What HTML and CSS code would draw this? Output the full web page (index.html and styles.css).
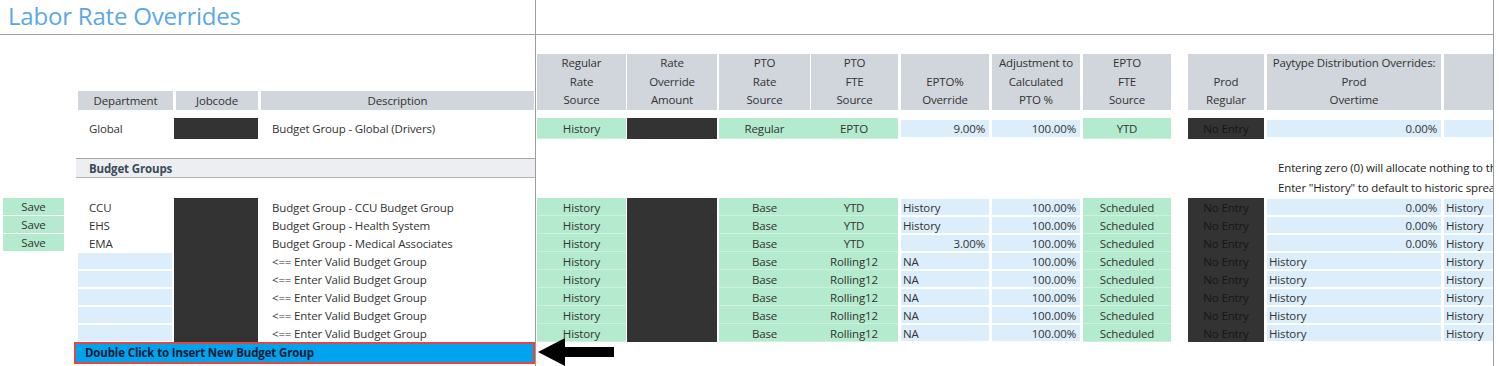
FILE: index.html
```html
<!DOCTYPE html>
<html lang="en">
<head>
  <meta charset="UTF-8">
  <title>Labor Rate Overrides</title>
  <link rel="stylesheet" href="styles.css">
</head>
<body>
  <div class="sheet">
    <div class="pane pane-left">
      <div class="title-bar"><h1 class="title">Labor Rate Overrides</h1></div>

      <div class="head-row">
        <div class="hcell c-dept">Department</div>
        <div class="hcell c-job">Jobcode</div>
        <div class="hcell c-desc">Description</div>
      </div>

      <div class="row row-global">
        <div class="cell c-save"></div>
        <div class="cell c-dept txt">Global</div>
        <div class="cell c-job black"></div>
        <div class="cell c-desc txt">Budget Group - Global (Drivers)</div>
      </div>

      <div class="mid">
        <div class="band">Budget Groups</div>
      </div>

      <div class="rows">
        <div class="row">
          <div class="cell c-save save">Save</div>
          <div class="cell c-dept txt">CCU</div>
          <div class="cell c-job black"></div>
          <div class="cell c-desc txt">Budget Group - CCU Budget Group</div>
        </div>
        <div class="row">
          <div class="cell c-save save">Save</div>
          <div class="cell c-dept txt">EHS</div>
          <div class="cell c-job black"></div>
          <div class="cell c-desc txt">Budget Group - Health System</div>
        </div>
        <div class="row">
          <div class="cell c-save save">Save</div>
          <div class="cell c-dept txt">EMA</div>
          <div class="cell c-job black"></div>
          <div class="cell c-desc txt">Budget Group - Medical Associates</div>
        </div>
        <div class="row">
          <div class="cell c-save"></div>
          <div class="cell c-dept blue"></div>
          <div class="cell c-job black"></div>
          <div class="cell c-desc txt">&lt;== Enter Valid Budget Group</div>
        </div>
        <div class="row">
          <div class="cell c-save"></div>
          <div class="cell c-dept blue"></div>
          <div class="cell c-job black"></div>
          <div class="cell c-desc txt">&lt;== Enter Valid Budget Group</div>
        </div>
        <div class="row">
          <div class="cell c-save"></div>
          <div class="cell c-dept blue"></div>
          <div class="cell c-job black"></div>
          <div class="cell c-desc txt">&lt;== Enter Valid Budget Group</div>
        </div>
        <div class="row">
          <div class="cell c-save"></div>
          <div class="cell c-dept blue"></div>
          <div class="cell c-job black"></div>
          <div class="cell c-desc txt">&lt;== Enter Valid Budget Group</div>
        </div>
        <div class="row">
          <div class="cell c-save"></div>
          <div class="cell c-dept blue"></div>
          <div class="cell c-job black"></div>
          <div class="cell c-desc txt">&lt;== Enter Valid Budget Group</div>
        </div>
      </div>

      <div class="insert-row">
        <div class="insert-bar">Double Click to Insert New Budget Group</div>
      </div>
    </div>

    <div class="pane pane-right">
      <div class="title-bar"></div>

      <div class="head-row">
        <div class="hcell tall c-rrs"><span>Regular</span><span>Rate</span><span>Source</span></div>
        <div class="hcell tall c-roa"><span>Rate</span><span>Override</span><span>Amount</span></div>
        <div class="hcell tall c-ptor"><span>PTO</span><span>Rate</span><span>Source</span></div>
        <div class="hcell tall c-ptof split"><span>PTO</span><span>FTE</span><span>Source</span></div>
        <div class="hcell tall c-epto"><span>EPTO%</span><span>Override</span></div>
        <div class="hcell tall c-adj"><span>Adjustment to</span><span>Calculated</span><span>PTO %</span></div>
        <div class="hcell tall c-efte"><span>EPTO</span><span>FTE</span><span>Source</span></div>
        <div class="hcell tall c-preg"><span>Prod</span><span>Regular</span></div>
        <div class="hcell tall c-pot"><span>Paytype Distribution Overrides:</span><span>Prod</span><span>Overtime</span></div>
        <div class="hcell tall c-next"></div>
      </div>

      <div class="row row-global">
        <div class="cell c-rrs green">History</div>
        <div class="cell c-roa black"></div>
        <div class="cell c-ptor green">Regular</div>
        <div class="cell c-ptof green">EPTO</div>
        <div class="cell c-epto blue num">9.00%</div>
        <div class="cell c-adj blue num">100.00%</div>
        <div class="cell c-efte green">YTD</div>
        <div class="cell c-preg black">No Entry</div>
        <div class="cell c-pot blue num">0.00%</div>
        <div class="cell c-next blue"></div>
      </div>

      <div class="mid notes">
        <p>Entering zero (0) will allocate nothing to that paytype</p>
        <p>Enter "History" to default to historic spread</p>
      </div>

      <div class="rows">
        <div class="row">
          <div class="cell c-rrs green">History</div>
          <div class="cell c-roa black"></div>
          <div class="cell c-ptor green">Base</div>
          <div class="cell c-ptof green">YTD</div>
          <div class="cell c-epto blue lft">History</div>
          <div class="cell c-adj blue num">100.00%</div>
          <div class="cell c-efte green">Scheduled</div>
          <div class="cell c-preg black">No Entry</div>
          <div class="cell c-pot blue num">0.00%</div>
          <div class="cell c-next blue lft">History</div>
        </div>
        <div class="row">
          <div class="cell c-rrs green">History</div>
          <div class="cell c-roa black"></div>
          <div class="cell c-ptor green">Base</div>
          <div class="cell c-ptof green">YTD</div>
          <div class="cell c-epto blue lft">History</div>
          <div class="cell c-adj blue num">100.00%</div>
          <div class="cell c-efte green">Scheduled</div>
          <div class="cell c-preg black">No Entry</div>
          <div class="cell c-pot blue num">0.00%</div>
          <div class="cell c-next blue lft">History</div>
        </div>
        <div class="row">
          <div class="cell c-rrs green">History</div>
          <div class="cell c-roa black"></div>
          <div class="cell c-ptor green">Base</div>
          <div class="cell c-ptof green">YTD</div>
          <div class="cell c-epto blue num">3.00%</div>
          <div class="cell c-adj blue num">100.00%</div>
          <div class="cell c-efte green">Scheduled</div>
          <div class="cell c-preg black">No Entry</div>
          <div class="cell c-pot blue num">0.00%</div>
          <div class="cell c-next blue lft">History</div>
        </div>
        <div class="row">
          <div class="cell c-rrs green">History</div>
          <div class="cell c-roa black"></div>
          <div class="cell c-ptor green">Base</div>
          <div class="cell c-ptof green">Rolling12</div>
          <div class="cell c-epto blue lft">NA</div>
          <div class="cell c-adj blue num">100.00%</div>
          <div class="cell c-efte green">Scheduled</div>
          <div class="cell c-preg black">No Entry</div>
          <div class="cell c-pot blue lft">History</div>
          <div class="cell c-next blue lft">History</div>
        </div>
        <div class="row">
          <div class="cell c-rrs green">History</div>
          <div class="cell c-roa black"></div>
          <div class="cell c-ptor green">Base</div>
          <div class="cell c-ptof green">Rolling12</div>
          <div class="cell c-epto blue lft">NA</div>
          <div class="cell c-adj blue num">100.00%</div>
          <div class="cell c-efte green">Scheduled</div>
          <div class="cell c-preg black">No Entry</div>
          <div class="cell c-pot blue lft">History</div>
          <div class="cell c-next blue lft">History</div>
        </div>
        <div class="row">
          <div class="cell c-rrs green">History</div>
          <div class="cell c-roa black"></div>
          <div class="cell c-ptor green">Base</div>
          <div class="cell c-ptof green">Rolling12</div>
          <div class="cell c-epto blue lft">NA</div>
          <div class="cell c-adj blue num">100.00%</div>
          <div class="cell c-efte green">Scheduled</div>
          <div class="cell c-preg black">No Entry</div>
          <div class="cell c-pot blue lft">History</div>
          <div class="cell c-next blue lft">History</div>
        </div>
        <div class="row">
          <div class="cell c-rrs green">History</div>
          <div class="cell c-roa black"></div>
          <div class="cell c-ptor green">Base</div>
          <div class="cell c-ptof green">Rolling12</div>
          <div class="cell c-epto blue lft">NA</div>
          <div class="cell c-adj blue num">100.00%</div>
          <div class="cell c-efte green">Scheduled</div>
          <div class="cell c-preg black">No Entry</div>
          <div class="cell c-pot blue lft">History</div>
          <div class="cell c-next blue lft">History</div>
        </div>
        <div class="row">
          <div class="cell c-rrs green">History</div>
          <div class="cell c-roa black"></div>
          <div class="cell c-ptor green">Base</div>
          <div class="cell c-ptof green">Rolling12</div>
          <div class="cell c-epto blue lft">NA</div>
          <div class="cell c-adj blue num">100.00%</div>
          <div class="cell c-efte green">Scheduled</div>
          <div class="cell c-preg black">No Entry</div>
          <div class="cell c-pot blue lft">History</div>
          <div class="cell c-next blue lft">History</div>
        </div>
      </div>

      <div class="insert-row">
        <svg class="arrow" width="76" height="30" viewBox="0 0 76 30">
          <polygon points="0,15 27,1 27,29" fill="#000"/>
          <rect x="26" y="10" width="50" height="10" fill="#000"/>
        </svg>
      </div>
    </div>
  </div>
</body>
</html>
```

FILE: styles.css
```css
* {
  box-sizing: border-box;
}
body {
  margin: 0;
  background: #fff;
  color: #333;
  font-family: "Open Sans", "Noto Sans", sans-serif;
  font-size: 11.5px;
  letter-spacing: -0.15px;
}
.sheet {
  display: flex;
  height: 366px;
  overflow: hidden;
}
.pane {
  flex-shrink: 0;
  overflow: hidden;
}
.pane-left {
  width: 536px;
  border-right: 1px solid #9c9c9c;
}
.pane-right {
  width: 958px;
  border-right: 1px solid #9c9c9c;
}
.title-bar {
  height: 35px;
  border-bottom: 1px solid #a4a4a4;
}
.title {
  margin: 0;
  padding-left: 8px;
  font-size: 24px;
  font-weight: 400;
  letter-spacing: -0.2px;
  line-height: 32px;
  color: #5aa9e4;
}

/* headers */
.head-row {
  display: flex;
  align-items: flex-end;
  height: 75px;
}
.hcell {
  flex-shrink: 0;
  height: 19px;
  background: #d0d6dc;
  line-height: 19px;
  text-align: center;
  white-space: nowrap;
}
.hcell.tall {
  height: 56px;
  display: flex;
  flex-direction: column;
  justify-content: flex-end;
  line-height: 18.7px;
}
.hcell.split {
  border-left: 1px solid #fff;
}

/* rows */
.row {
  display: flex;
  height: 18px;
}
.row-global {
  height: 21px;
  margin-top: 8px;
}
.cell {
  flex-shrink: 0;
  height: 100%;
  line-height: 19px;
  white-space: nowrap;
  overflow: hidden;
}
.row-global .cell {
  line-height: 22px;
}
.txt {
  padding-left: 11px;
}
.c-desc.txt {
  padding-left: 10px;
}
.green {
  background: #b4eacd;
  text-align: center;
  box-shadow: inset 0 -1px rgba(255, 255, 255, 0.35);
}
.black {
  background: #333;
  color: #161616;
  text-align: center;
}
.blue {
  height: 16px;
  margin-top: 1px;
  background: #dcedfb;
  line-height: 17px;
}
.row-global .blue {
  height: 17px;
  margin-top: 2px;
  line-height: 18px;
}
.num {
  text-align: right;
  padding-right: 4px;
}
.lft {
  padding-left: 2px;
}
.save {
  height: 17px;
  background: #b4eacd;
  text-align: center;
  line-height: 18px;
}

/* left columns */
.c-save { margin-left: 3px; width: 61px; }
.c-dept { margin-left: 14px; width: 94px; }
.c-job { margin-left: 2px; width: 84px; }
.c-desc { margin-left: 4px; width: 273px; }
.head-row .c-dept { margin-left: 78px; width: 95px; }
.head-row .c-job { margin-left: 3px; width: 82px; }
.head-row .c-desc { margin-left: 3px; width: 273px; }

/* right columns */
.c-rrs { margin-left: 1px; width: 89px; }
.c-roa { margin-left: 1px; width: 90px; }
.c-ptor { margin-left: 2px; width: 91px; }
.c-ptof { width: 88px; }
.c-epto { margin-left: 3px; width: 88px; }
.c-adj { margin-left: 3px; width: 88px; }
.c-efte { margin-left: 3px; width: 88px; }
.c-preg { margin-left: 17px; width: 76px; }
.c-pot { margin-left: 3px; width: 174px; }
.c-next { margin-left: 3px; width: 60px; }

/* budget groups band + notes */
.mid {
  height: 40px;
  margin-top: 19px;
}
.band {
  margin-left: 76px;
  height: 20px;
  padding-left: 13px;
  background: #eceef1;
  border-top: 1px solid #a8a8a8;
  border-bottom: 1px solid #b4b4b4;
  color: #3b4a5b;
  font-weight: 700;
  line-height: 19px;
}
.notes p {
  margin: 0;
  padding-left: 742px;
  color: #222;
  line-height: 20px;
  white-space: nowrap;
}

/* insert bar */
.insert-row {
  display: flex;
  height: 22px;
}
.insert-bar {
  flex: 1;
  margin-left: 74px;
  padding-left: 9px;
  background: #00a3ee;
  border: 2px solid #e8453c;
  color: #0a1a33;
  font-weight: 700;
  line-height: 18px;
  white-space: nowrap;
}
.arrow {
  flex-shrink: 0;
  margin-left: 2px;
  margin-top: -5px;
}
```
